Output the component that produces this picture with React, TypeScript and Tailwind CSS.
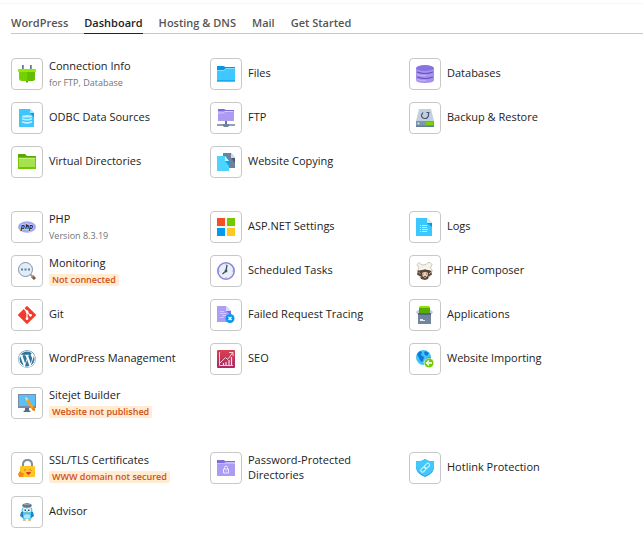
import type { ReactNode } from "react";

type Item = { label: string; icon: ReactNode; note?: string; warning?: string };

const Svg = ({ children }: { children: ReactNode }) => (
  <svg viewBox="0 0 18 18" className="size-[18px]" aria-hidden="true">
    {children}
  </svg>
);

const icons = {
  plug: (
    <Svg>
      <path d="M4 0h2v5H4zM12 0h2v5h-2z" fill="#8899ad" />
      <path d="M4 0h1v5H4zM12 0h1v5h-1z" fill="#63768d" />
      <path d="M8 15h2v2l-1 1-1-1z" fill="#71849b" />
      <path d="M1 6h16v7q0 3-3 3H4q-3 0-3-3z" fill="#73d100" />
      <path d="M9 6h8v7q0 3-3 3H9z" fill="#65bd00" />
      <rect y="4" width="18" height="3" rx="1" fill="#8ded00" />
    </Svg>
  ),
  odbc: (
    <Svg>
      <path d="M1 0h11l4 4v14H1z" fill="#3cc8ff" />
      <path d="M12 0l4 4h-4z" fill="#a8e8ff" />
      <path d="M12 4h4v4z" fill="#0a98e0" />
      <ellipse cx="9" cy="7.500" rx="5" ry="1.500" fill="#c3efff" />
      <path d="M4 9q5 2 10 0v1.500q-5 2-10 0zM4 12q5 2 10 0v1.500q-5 2.500-10 0z" fill="#c3efff" />
      <path d="M5 8.500h8" stroke="#7bd9ff" strokeWidth=".8" />
    </Svg>
  ),
  greenFolder: (
    <Svg>
      <path d="M0 1h7l2 2h9v4H0z" fill="#58a800" />
      <path d="M0 4h18v12H0z" fill="#71c800" />
      <path d="M1 5h16v9H1z" fill="#a5e34e" />
      <path d="M1 5h16v1H1z" fill="#c2f17b" />
    </Svg>
  ),
  blueFolder: (
    <Svg>
      <path d="M0 1h7l1 1h10v4H0z" fill="#0795e6" />
      <path d="M0 5h7l2-2h9v14H0z" fill="#3ec8ff" />
      <path d="M0 5h7l2-2h9v1H9L7 6H0z" fill="#82deff" />
      <path d="M0 15h18v1H0z" fill="#18acef" />
    </Svg>
  ),
  ftp: (
    <Svg>
      <path d="M1 0h6l2 1h8v4H1z" fill="#8069df" />
      <path d="M1 2h16v10H1z" fill="#ac9bf3" />
      <path d="M1 4h5l2-1.500h8" stroke="#d4c9ff" fill="none" />
      <path d="M8 12h2v3H8z" fill="#63768d" />
      <path d="M0 15h18v2H0z" fill="#8fa1b5" />
      <path d="M6 15h6v2l-1 1H7l-1-1z" fill="#71849b" />
    </Svg>
  ),
  copy: (
    <Svg>
      <path d="M6 0h8l4 5v10H6z" fill="#6c83a0" />
      <path d="M14 0v5h4z" fill="#d4dce6" />
      <path d="M14 5h4v5z" fill="#465a75" />
      <path d="M0 3h8l4 5v10H0z" fill="#4dd4ff" />
      <path d="M8 3v5h4z" fill="#c8f3ff" />
      <path d="M8 8h4v5z" fill="#08a6e9" />
    </Svg>
  ),
  databases: (
    <Svg>
      <path d="M0 3v12q0 3 9 3t9-3V3z" fill="#a792ee" />
      <path d="M1 7q8 3 16 0M1 12q8 3 16 0" fill="none" stroke="#6a52c4" strokeWidth="1.200" />
      <path d="M1 9.500q6 2 9 1M1 14.500q6 2 9 1" fill="none" stroke="#c4b6fb" />
      <ellipse cx="9" cy="3" rx="9" ry="3" fill="#8774df" />
    </Svg>
  ),
  backup: (
    <Svg>
      <path d="M3 0h12l3 12H0z" fill="#c4cfde" />
      <path d="M0 12h18v6H0z" fill="#8297ae" />
      <path d="M0 16.500h18V18H0z" fill="#667c96" />
      <path d="M10 13h7v3h-7z" fill="#76d40a" />
      <circle cx="2.500" cy="14.500" r="1" fill="#b8f2ff" />
      <path d="M7 3.500L5.500 6a3.500 3.500 0 1 0 7 0V4M10.500 3.500h3" fill="none" stroke="#405575" strokeWidth="1.200" />
    </Svg>
  ),
  php: (
    <Svg>
      <ellipse cx="9" cy="9" rx="9" ry="5.700" fill="#a3a8f1" />
      <text x="9" y="10.500" textAnchor="middle" className="font-['Open_Sans',sans-serif] text-[7px] font-bold italic" fill="#111" stroke="#e8e9ff" strokeWidth=".8" paintOrder="stroke">
        php
      </text>
    </Svg>
  ),
  monitoring: (
    <Svg>
      <path d="M14 14l3 3" stroke="#80563d" strokeWidth="3" />
      <path d="M12 12l3 3" stroke="#b39a85" strokeWidth="2" />
      <circle cx="7.500" cy="7.500" r="7" fill="#e1edf8" stroke="#8293a8" />
      <path d="M3 6.500h2v2H3zM6.500 6.500h2v2h-2zM10 6.500h2v2h-2z" fill="#667d9d" />
    </Svg>
  ),
  git: (
    <Svg>
      <path d="M9 .7L17.300 9 9 17.300.700 9z" fill="#f03c2e" stroke="#f03c2e" strokeWidth="1.400" strokeLinejoin="round" />
      <path d="M5.500 2L9 5.500V13M9 6l3.500 3.500" fill="none" stroke="#fff" strokeWidth="1.200" />
      <circle cx="9" cy="5.700" r="1.400" fill="#fff" />
      <circle cx="9" cy="12.700" r="1.400" fill="#fff" />
      <circle cx="12.500" cy="9.300" r="1.400" fill="#fff" />
    </Svg>
  ),
  wordpress: (
    <svg viewBox="0 0 512 512" className="size-[18px]" fill="#2f759c" aria-hidden="true">
      <path d="M61.700 169.400l101.500 278C92.200 413 43.300 340.200 43.300 256c0-30.900 6.600-60.100 18.400-86.600zm337.900 75.900c0-26.300-9.400-44.500-17.500-58.700-10.800-17.500-20.900-32.400-20.900-49.900 0-19.600 14.800-37.800 35.700-37.800.9 0 1.800.1 2.800.2-37.900-34.700-88.300-55.900-143.700-55.900-74.300 0-139.700 38.100-177.800 95.900 5 .2 9.700.3 13.700.3 22.200 0 56.700-2.700 56.700-2.700 11.500-.7 12.800 16.200 1.400 17.500 0 0-11.500 1.300-24.300 2l77.500 230.400L249.800 247l-33.100-90.800c-11.500-.7-22.300-2-22.300-2-11.500-.7-10.100-18.200 1.300-17.500 0 0 35.100 2.700 56 2.700 22.200 0 56.700-2.700 56.700-2.700 11.500-.7 12.800 16.200 1.400 17.500 0 0-11.500 1.300-24.300 2l76.900 228.700 21.200-70.900c9-29.400 16-50.500 16-68.700zm-139.900 29.300l-63.800 185.500c19.100 5.600 39.200 8.700 60.100 8.700 24.800 0 48.500-4.300 70.600-12.100-.6-.9-1.100-1.900-1.500-2.900l-65.400-179.200zm183-120.700c.9 6.800 1.400 14 1.400 21.900 0 21.600-4 45.800-16.200 76.200l-65 187.900C426.200 403 468.700 334.500 468.700 256c0-37-9.400-71.800-26-102.100zM504 256c0 136.800-111.300 248-248 248C119.200 504 8 392.700 8 256 8 119.200 119.200 8 256 8c136.700 0 248 111.200 248 248zm-11.400 0c0-130.500-106.200-236.600-236.600-236.600C125.500 19.400 19.400 125.500 19.400 256S125.600 492.600 256 492.600c130.500 0 236.600-106.100 236.600-236.600z" />
    </svg>
  ),
  sitejet: (
    <Svg>
      <path d="M0 0h18v14H0z" fill="#778ba4" />
      <path d="M1 1h16v11H1z" fill="#5ac0fa" />
      <path d="M7 14h4v2l2 2H5l2-2z" fill="#586d88" />
      <path d="M8 4l2 1 7 10-2 2-7-10z" fill="#ff9f18" />
      <path d="M7 3l3 1.500L8.500 7z" fill="#ffe2ae" />
      <path d="M15.500 13l1.500 2v1.500l-1 .5-2-1.500z" fill="#ef7417" />
    </Svg>
  ),
  asp: (
    <Svg>
      <path d="M0 0h18v18H0z" fill="#f3f3ef" />
      <path d="M0 0h8v8H0z" fill="#f25022" />
      <path d="M10 0h8v8h-8z" fill="#75c800" />
      <path d="M0 10h8v8H0z" fill="#009bed" />
      <path d="M10 10h8v8h-8z" fill="#ffc91b" />
    </Svg>
  ),
  clock: (
    <Svg>
      <circle cx="9" cy="9" r="8.200" fill="#e6f0f5" stroke="#927fe0" strokeWidth="1.600" />
      <path d="M9 2v1M9 15v1M2 9h1M15 9h1" stroke="#a2b2bf" />
      <path d="M10 3L9 9l-3.500 3" fill="none" stroke="#405166" strokeWidth="1.400" />
      <circle cx="9" cy="9" r="1.400" fill="#405166" />
    </Svg>
  ),
  failed: (
    <Svg>
      <path d="M0 0h9l5 5v11H0z" fill="#ae9df5" />
      <path d="M9 0l5 5H9z" fill="#ddd6ff" />
      <path d="M9 5h5v4z" fill="#806bd8" />
      <path d="M3 5.500h4M3 7.500h6M5 9.500h4M3 11.500h4" stroke="#d0c6ff" />
      <circle cx="13" cy="12.500" r="4.500" fill="#0798ed" />
      <path d="M11.500 11l3 3m0-3l-3 3" stroke="#fff" strokeWidth="1.300" />
    </Svg>
  ),
  seo: (
    <Svg>
      <defs>
        <linearGradient id="seo" x2="0" y2="1">
          <stop stopColor="#d94152" />
          <stop offset="1" stopColor="#a92864" />
        </linearGradient>
      </defs>
      <rect width="18" height="18" rx="1" fill="url(#seo)" />
      <path d="M2.500 2v13.500H16M3 13l5.500-5.500 2 2L15.500 3M12 2.500h4V6" fill="none" stroke="#ffdbe4" strokeWidth=".9" />
      <path d="M6.500 13v2M9 12v3M12 10v5M14.500 7v8" stroke="#ffdbe4" strokeWidth="1.200" />
    </Svg>
  ),
  logs: (
    <Svg>
      <path d="M0 0h11l5 5v13H0z" fill="#3cc8ff" />
      <path d="M11 0l5 5h-5z" fill="#c2efff" />
      <path d="M11 5h5v4z" fill="#0a98e0" />
      <path d="M4 7.500h1M6 7.500h5M4 9.500h1M6 9.500h5M4 11.500h1M6 11.500h6M4 13.500h1M6 13.500h5" stroke="#c9f2ff" strokeWidth=".9" />
    </Svg>
  ),
  composer: (
    <Svg>
      <path d="M3 6L1 2.500 3 .500l2 2 2 .5 3-.5L12 .500h2l2 2L14.500 6l2 3-3 2H4L1 9z" fill="#f6f3ec" stroke="#bab4a9" strokeWidth=".7" />
      <path d="M2 8.500q7-3 13 0l1 4-3 2-1 2.500-3 1-4-1-1-2.500-3-2z" fill="#5b473a" />
      <path d="M6 11q3-2 6 0l-.5 3L9 16l-2.500-2z" fill="#efd0b5" />
      <path d="M3 8q6-2.500 12 0" fill="none" stroke="#fff" />
      <path d="M6.500 12h1M10 12h1M8 14.500h2" stroke="#493529" strokeWidth=".8" />
      <path d="M2.500 10l2 2M13 12l2-2M3.500 14l2 1M12 15l2-1" stroke="#b9a591" />
    </Svg>
  ),
  applications: (
    <Svg>
      <path d="M3 1h11v7H3z" fill="#58ad00" />
      <path d="M4 0h9l1 2H3z" fill="#8ce30a" />
      <path d="M2 4h1v3h11V4h1l2 2-1 2H1L0 6z" fill="#c0cbda" />
      <path d="M2 8h13v10H2z" fill="#71859e" />
      <path d="M2 7h13v2H2z" fill="#52677f" />
      <path d="M4 13h3v1h2v1H4z" fill="#e4edf5" />
    </Svg>
  ),
  importing: (
    <Svg>
      <circle cx="7.500" cy="7.500" r="7.500" fill="#42c4fb" />
      <path d="M1 4l3-3 2 1-1 3 3 2-1 4-2 1-2-4zM9 1l4 2-2 3-2-1-1-2zM10 8l4-1 1 1-2 3h-2z" fill="#1177d4" />
      <circle cx="13" cy="13" r="4.800" fill="#70c900" stroke="#fff" strokeWidth=".6" />
      <path d="M16 13h-5.500M13 10.500L10.500 13l2.500 2.500" fill="none" stroke="#fff" strokeWidth="1.300" />
    </Svg>
  ),
  ssl: (
    <Svg>
      <path d="M5 8V5.500Q5 1 9.500 1T14 5.500V8" fill="none" stroke="#7d8e96" strokeWidth="2" />
      <rect x="2" y="7" width="15" height="11" rx="1" fill="#ffc526" />
      <path d="M6 11.500l2-1M11.500 10.500l2 1" stroke="#a56b1b" strokeWidth=".8" />
      <path d="M8 13h5q-1 3-2.500 3T8 13z" fill="#dc392b" />
      <path d="M2 12l2 2h2l-1 4H1l-1-3z" fill="#f48b12" />
    </Svg>
  ),
  advisor: (
    <Svg>
      <path d="M4 5q5-2 10 0l1 7-2 4H5l-2-4z" fill="#4bc4f2" />
      <path d="M3 9l-1 4 3 2V9zM15 9l1 4-3 2V9z" fill="#1d86c6" />
      <path d="M4 3l1-2 4-1 4 1 1 2-2 1.500H6z" fill="#66788c" />
      <path d="M6 1.500h6" stroke="#8fa0b3" />
      <circle cx="7" cy="7" r="2.200" fill="#e7f5fb" />
      <circle cx="11" cy="7" r="2.200" fill="#e7f5fb" />
      <path d="M6.500 6.500H8V8H6.500zM10 6.500h1.500V8H10z" fill="#304862" />
      <path d="M8 8.500h2l-1 2.500z" fill="#f6a32a" />
      <path d="M6 12q3-1.500 6 0v3l-3 1-3-1z" fill="#a9e9fb" />
      <path d="M5 16h3v2H5zM10 16h3v2h-3z" fill="#e5bd94" />
    </Svg>
  ),
  lockedFolder: (
    <Svg>
      <path d="M0 1h7l1 1h10v4H0z" fill="#806cdc" />
      <path d="M0 4h18v13H0z" fill="#ac9bf3" />
      <path d="M0 4h7l2-1h9v2H0z" fill="#c6b9fb" />
      <path d="M7.500 10V8.500a1.500 1.500 0 0 1 3 0V10M6.500 10h5v4h-5zM9 11.500v1" fill="none" stroke="#eee9ff" />
    </Svg>
  ),
  shield: (
    <Svg>
      <path d="M9 0q4 3 9 2v7q-1 6-9 9-8-3-9-9V2q5 1 9-2z" fill="#119ce5" />
      <path d="M9 0q4 3 9 2v6q-1 6-9 9-8-3-9-9V2q5 1 9-2z" fill="#42c8fc" />
      <g transform="rotate(-45 9 8.500)" fill="none" stroke="#d9f6ff">
        <rect x="3.500" y="7" width="6" height="3.500" rx="1.700" />
        <rect x="8.500" y="7" width="6" height="3.500" rx="1.700" />
      </g>
    </Svg>
  ),
};

const tabs = ["WordPress", "Dashboard", "Hosting & DNS", "Mail", "Get Started"];

const groups: { name: string; items: Item[] }[] = [
  {
    name: "Files and databases",
    items: [
      { label: "Connection Info", note: "for FTP, Database", icon: icons.plug },
      { label: "Files", icon: icons.blueFolder },
      { label: "Databases", icon: icons.databases },
      { label: "ODBC Data Sources", icon: icons.odbc },
      { label: "FTP", icon: icons.ftp },
      { label: "Backup & Restore", icon: icons.backup },
      { label: "Virtual Directories", icon: icons.greenFolder },
      { label: "Website Copying", icon: icons.copy },
    ],
  },
  {
    name: "Development",
    items: [
      { label: "PHP", note: "Version 8.3.19", icon: icons.php },
      { label: "ASP.NET Settings", icon: icons.asp },
      { label: "Logs", icon: icons.logs },
      { label: "Monitoring", warning: "Not connected", icon: icons.monitoring },
      { label: "Scheduled Tasks", icon: icons.clock },
      { label: "PHP Composer", icon: icons.composer },
      { label: "Git", icon: icons.git },
      { label: "Failed Request Tracing", icon: icons.failed },
      { label: "Applications", icon: icons.applications },
      { label: "WordPress Management", icon: icons.wordpress },
      { label: "SEO", icon: icons.seo },
      { label: "Website Importing", icon: icons.importing },
      { label: "Sitejet Builder", warning: "Website not published", icon: icons.sitejet },
    ],
  },
  {
    name: "Security",
    items: [
      { label: "SSL/TLS Certificates", warning: "WWW domain not secured", icon: icons.ssl },
      { label: "Password-Protected Directories", icon: icons.lockedFolder },
      { label: "Hotlink Protection", icon: icons.shield },
      { label: "Advisor", icon: icons.advisor },
    ],
  },
];

function Tool({ item }: { item: Item }) {
  const hasDetail = item.note || item.warning;
  return (
    <a href="#" className="flex h-8 items-center gap-1.5 pr-6">
      <span className="flex size-8 shrink-0 items-center justify-center rounded border border-[#c8c8c8]">
        {item.icon}
      </span>
      <span className={hasDetail ? "flex min-w-0 flex-col items-start gap-1 pb-px" : "min-w-0 pb-[3px] leading-[15px]"}>
        <span className="text-[11px] leading-[15px] text-[#222]">{item.label}</span>
        {item.note && <span className="text-[9px] leading-[12px] whitespace-nowrap text-[#737373]">{item.note}</span>}
        {item.warning && (
          <span className="rounded-xs bg-[#ffecd2] px-[3px] text-[9px] leading-[12px] font-semibold whitespace-nowrap text-[#cf5015]">
            {item.warning}
          </span>
        )}
      </span>
    </a>
  );
}

export default function App() {
  return (
    <main className="bg-white pt-[3px] font-['Open_Sans',sans-serif] text-[11px]">
      <div className="border-t border-[#f5f5f5] pl-[11px]">
        <nav className="flex h-[30px] gap-4 border-b border-[#c8c8c8] pt-[11px]">
          {tabs.map((tab) => (
            <a
              key={tab}
              href="#"
              className={
                tab === "Dashboard"
                  ? "-mb-px border-b border-[#222] leading-[15px] font-semibold text-[#222]"
                  : "leading-[15px] font-semibold text-[#555]"
              }
            >
              {tab}
            </a>
          ))}
        </nav>
        <div className="flex flex-col gap-[33px] pt-6 pr-[35px]">
          {groups.map((group) => (
            <section key={group.name} aria-label={group.name} className="grid grid-cols-3 gap-y-3">
              {group.items.map((item) => (
                <Tool key={item.label} item={item} />
              ))}
            </section>
          ))}
        </div>
      </div>
    </main>
  );
}
